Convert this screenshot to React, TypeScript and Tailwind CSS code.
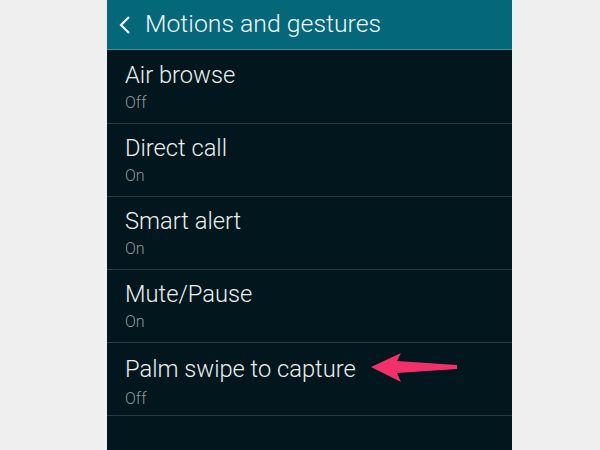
import React from "react"

const items = [
  { title: "Air browse", status: "Off" },
  { title: "Direct call", status: "On" },
  { title: "Smart alert", status: "On" },
  { title: "Mute/Pause", status: "On" },
  { title: "Palm swipe to capture", status: "Off", arrow: true },
]

function PinkArrow() {
  return (
    <svg width="90" height="32" viewBox="0 0 90 32" className="ml-[15px]">
      <polygon
        points="0,14 30,0 26,8 86,12 86,16 26,20 30,29"
        fill="#f4306b"
      />
    </svg>
  )
}

export default function App() {
  return (
    <div
      className="w-[600px] h-[450px] bg-[#efefef] pl-[107px] overflow-hidden"
      style={{ fontFamily: "Roboto, 'Noto Sans', sans-serif" }}
    >
      <div className="w-[405px] h-full bg-[#02161d] flex flex-col">
        {/* Header */}
        <div className="h-[50px] bg-[#04677a] border-b border-[#3f8e9a] flex items-center">
          <svg width="14" height="18" viewBox="0 0 14 18" className="ml-[12px]">
            <polyline
              points="10,1 2,9 10,17"
              fill="none"
              stroke="#eef4f5"
              strokeWidth="2.2"
            />
          </svg>
          <span className="ml-[12px] text-[24.8px] font-light text-[#f1f5f6] leading-none">
            Motions and gestures
          </span>
        </div>

        {/* List */}
        <div className="mt-px flex flex-col">
          {items.map((item) => (
            <div
              key={item.title}
              className="h-[73px] border-b border-[#2a3b42] pl-[18px] pt-[10px]"
            >
              <div className="flex items-center">
                <div className="text-[23.7px] font-light text-[#eceff0] leading-[28px]">
                  {item.title}
                </div>
                {item.arrow && <PinkArrow />}
              </div>
              <div className="mt-[5px] text-[16px] font-light text-[#8d989c] leading-[18px]">
                {item.status}
              </div>
            </div>
          ))}
        </div>
      </div>
    </div>
  )
}
